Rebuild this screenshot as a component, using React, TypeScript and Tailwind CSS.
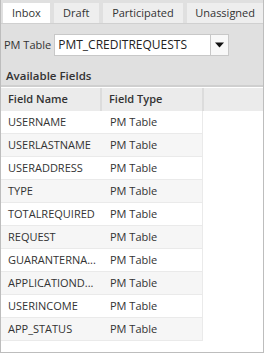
const fields = [
  "USERNAME",
  "USERLASTNAME",
  "USERADDRESS",
  "TYPE",
  "TOTALREQUIRED",
  "REQUEST",
  "GUARANTERNA...",
  "APPLICATIOND...",
  "USERINCOME",
  "APP_STATUS",
]

const tabs = [
  { label: "Inbox", w: "w-[47px]", active: true },
  { label: "Draft", w: "w-[45px]" },
  { label: "Participated", w: "w-[81px]" },
  { label: "Unassigned", w: "w-[76px]" },
]

export default function App() {
  return (
    <div className="w-[265px] h-[354px] bg-white font-['Open_Sans',sans-serif] text-[11px] text-[#333]">
      <div className="w-[264px] h-[353px] flex flex-col border-l border-r border-b border-[#bdbdbd] bg-[#e0e0e0]">
        {/* tabs */}
        <div className="flex gap-[4px] pl-[2px] pt-[3px] bg-[#e0e0e0] border-b border-[#d0d0d0]">
          {tabs.map((t) => (
            <div
              key={t.label}
              className={`${t.w} h-[20px] flex items-center justify-center ${
                t.active ? "bg-white" : "bg-[#eeeeee]"
              }`}
            >
              {t.label}
            </div>
          ))}
        </div>

        {/* table picker */}
        <div className="flex gap-[3px] pl-[3px] pt-[10px] h-[42px] items-start">
          <span className="leading-[21px]">PM Table</span>
          <div className="flex w-[175px] h-[22px] bg-white border border-[#c8c8c8]">
            <div className="flex-1 pl-[3px] text-[12px] leading-[20px] text-[#222]">PMT_CREDITREQUESTS</div>
            <div className="w-[18px] border-l border-[#c8c8c8] bg-[#f8f8f8] flex items-center justify-center">
              <svg width="9" height="6" viewBox="0 0 9 6">
                <path d="M0 0.5 L9 0.5 L4.5 5.5 Z" fill="#111" />
              </svg>
            </div>
          </div>
        </div>

        <div className="pl-[5px] font-semibold leading-[20px] h-[19px] text-[11.5px]">Available Fields</div>

        {/* grid */}
        <div className="flex-1 bg-white border-t-2 border-[#cfcfcf] pt-[1px]">
          <div className="flex h-[23px] bg-[#ebebeb] font-semibold items-center">
            <div className="w-[101px] pl-[7px] border-r-2 border-[#dcdcdc] h-full flex items-center">Field Name</div>
            <div className="w-[102px] pl-[7px] border-r-2 border-[#dcdcdc] h-full flex items-center">Field Type</div>
            <div className="flex-1" />
          </div>
          <div className="w-[202px]">
            {fields.map((f, i) => (
              <div
                key={f}
                className={`flex h-[23px] items-center border-b border-r border-[#eaeaea] ${
                  i % 2 === 1 ? "bg-[#f6f6f6]" : "bg-white"
                }`}
              >
                <div className="w-[101px] pl-[7px] whitespace-nowrap">{f}</div>
                <div className="pl-[8px]">PM Table</div>
              </div>
            ))}
          </div>
        </div>
      </div>
    </div>
  )
}
